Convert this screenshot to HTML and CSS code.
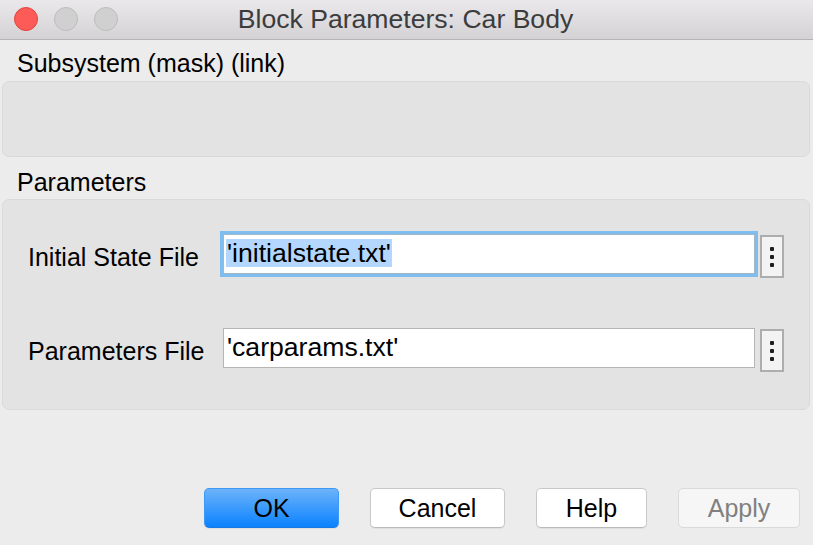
FILE: index.html
```html
<!DOCTYPE html>
<html lang="en">
<head>
<meta charset="utf-8">
<title>Block Parameters: Car Body</title>
<link rel="stylesheet" href="styles.css">
</head>
<body>
<div class="window">
  <header class="titlebar">
    <div class="lights">
      <span class="light light-close"></span>
      <span class="light"></span>
      <span class="light"></span>
    </div>
    <div class="title">Block Parameters: Car Body</div>
    <div class="spacer"></div>
  </header>
  <main class="content">
    <div class="section-label label-first">Subsystem (mask) (link)</div>
    <div class="panel panel-desc"></div>
    <div class="section-label label-second">Parameters</div>
    <div class="panel panel-params">
      <div class="param-row">
        <div class="param-label">Initial State File</div>
        <div class="field field-focused"><span class="selected">'initialstate.txt'</span></div>
        <div class="more"><i></i><i></i><i></i></div>
      </div>
      <div class="param-row">
        <div class="param-label">Parameters File</div>
        <div class="field"><span>'carparams.txt'</span></div>
        <div class="more"><i></i><i></i><i></i></div>
      </div>
    </div>
    <div class="buttons">
      <div class="btn btn-default btn-ok">OK</div>
      <div class="btn btn-cancel">Cancel</div>
      <div class="btn btn-help">Help</div>
      <div class="btn btn-disabled btn-apply">Apply</div>
    </div>
  </main>
</div>
</body>
</html>
```

FILE: styles.css
```css
* { box-sizing: border-box; }

html, body {
  margin: 0;
  padding: 0;
  background: #ececec;
}

body {
  font-family: "Liberation Sans", Arial, sans-serif;
  color: #000;
}

.window {
  width: 813px;
  height: 545px;
  background: #ececec;
  overflow: hidden;
}

.titlebar {
  height: 40px;
  border-bottom: 1px solid #b4b4b4;
  background: linear-gradient(#eae8ea, #d4d2d4);
  display: grid;
  grid-template-columns: 1fr auto 1fr;
  align-items: center;
}

.lights {
  display: flex;
  gap: 16px;
  padding-left: 14px;
  padding-bottom: 1px;
}

.light {
  width: 24px;
  height: 24px;
  border-radius: 50%;
  background: #d0d0d0;
  border: 1px solid #bdbdbd;
}

.light-close {
  background: #fc5b57;
  border-color: #e0443e;
}

.title {
  font-size: 26.6px;
  line-height: 39px;
  color: #3c3c3c;
  white-space: nowrap;
  padding-right: 2px;
}

.content {
  display: flex;
  flex-direction: column;
}

.section-label {
  font-size: 25px;
  line-height: 28px;
  height: 28px;
  padding-left: 17px;
  white-space: nowrap;
}

.label-first { margin-top: 9px; }
.label-second { margin-top: 11px; }

.panel {
  margin-left: 2px;
  margin-right: 3px;
  background: #e3e3e3;
  border: 1px solid #dadada;
  border-radius: 7px;
}

.panel-desc {
  margin-top: 4px;
  height: 76px;
}

.panel-params {
  margin-top: 3px;
  height: 211px;
  padding: 34px 0 37px 25px;
  display: flex;
  flex-direction: column;
  gap: 50px;
}

.param-row {
  display: grid;
  grid-template-columns: 190px 532px 24px;
  column-gap: 5px;
  align-items: start;
}

.param-label {
  font-size: 25px;
  line-height: 28px;
  padding-top: 9px;
  white-space: nowrap;
}

.field {
  height: 40px;
  background: #fff;
  border: 1px solid #b5b5b5;
  padding: 4px 0 0 2px;
  font-size: 26.6px;
  line-height: 28px;
  white-space: nowrap;
  overflow: hidden;
}

.field span {
  display: inline-block;
  height: 28px;
  padding-left: 1px;
  padding-right: 1px;
}

.field-focused {
  box-shadow: 0 0 0 3px #7fbdee;
  border-color: #9fb8cc;
}

.selected {
  background: #b3d7fe;
}

.more {
  margin-top: 1px;
  height: 43px;
  border: 2px solid #adadad;
  background: #f3f3f3;
  display: flex;
  flex-direction: column;
  align-items: center;
  justify-content: center;
  gap: 4px;
}

.more i {
  display: block;
  width: 4px;
  height: 4px;
  border-radius: 1px;
  background: #1e1e1e;
}

.buttons {
  margin-top: 78px;
  display: flex;
  justify-content: flex-end;
  gap: 31px;
  padding-right: 13px;
}

.btn {
  height: 40px;
  padding: 0;
  border: 1px solid #c9c9c9;
  border-bottom-color: #b9b9b9;
  border-radius: 5px;
  background: #fff;
  font-size: 25px;
  line-height: 38px;
  text-align: center;
  white-space: nowrap;
  box-shadow: 0 1px 1px rgba(0, 0, 0, 0.06);
}

.btn-ok { width: 135px; }
.btn-cancel { width: 135px; }
.btn-help { width: 111px; }
.btn-apply { width: 122px; }

.btn-default {
  background: linear-gradient(#6cb3fa, #0a82ff);
  border-color: #3d98f6;
  border-bottom-color: #1a78e0;
}

.btn-disabled {
  background: #f6f6f6;
  border-color: #dadada;
  color: #808080;
  box-shadow: none;
}
```
